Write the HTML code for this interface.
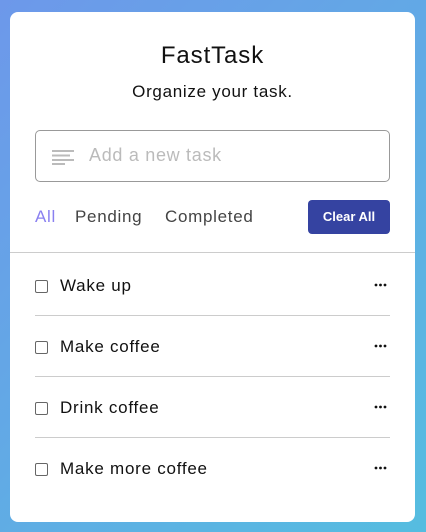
<!DOCTYPE html>
<html><head><style>
*{margin:0;padding:0;box-sizing:border-box}
body{width:426px;height:532px;overflow:hidden;background:linear-gradient(135deg,#6d98ea,#55bde0);font-family:"Liberation Sans",sans-serif;position:relative}
.card{position:absolute;left:10px;top:12px;width:405px;height:510px;background:#fff;border-radius:8px}
.abs{position:absolute}
h1{position:absolute;left:0;width:405px;top:30px;text-align:center;font-weight:normal;font-size:24px;letter-spacing:0.9px;color:#111}
.sub{position:absolute;left:0;width:405px;top:70px;text-align:center;font-size:17px;letter-spacing:0.7px;color:#111}
.input{left:25px;top:118px;width:355px;height:52px;border:1px solid #999;border-radius:5px}
.ph{left:79px;top:133px;font-size:18px;letter-spacing:0.7px;color:#bbb}
.f{top:195px;font-size:17px;letter-spacing:0.7px;color:#444}
.btn{left:298px;top:188px;width:82px;height:34px;background:#3543a1;border-radius:4px;color:#fff;font-size:13px;font-weight:bold;text-align:center;line-height:34px}
.hr{left:0;top:240px;width:405px;height:1px;background:#ccc}
.cb{position:absolute;width:13px;height:13px;border:1.3px solid #666;border-radius:2px}
.t{position:absolute;font-size:17px;letter-spacing:0.75px;color:#111}
.sep{left:25px;width:355px;height:1px;background:#ccc}
</style></head><body>
<div class="card">
<h1>FastTask</h1>
<div class="sub">Organize your task.</div>
<div class="abs input"></div>
<svg class="abs" style="left:42px;top:137px" width="22" height="16"><g fill="#bbb"><rect x="0" y="1" width="22" height="2"/><rect x="0" y="5.5" width="18" height="2"/><rect x="0" y="10" width="22" height="2"/><rect x="0" y="14" width="13" height="2"/></g></svg>
<div class="abs ph">Add a new task</div>
<div class="abs f" style="left:25px;color:#8a80f0">All</div>
<div class="abs f" style="left:65px">Pending</div>
<div class="abs f" style="left:155px">Completed</div>
<div class="abs btn">Clear All</div>
<div class="abs hr"></div>
<div class="cb" style="left:25px;top:268px"></div><div class="t" style="left:50px;top:264px">Wake up</div>
<div class="abs sep" style="top:303px"></div>
<div class="cb" style="left:25px;top:329px"></div><div class="t" style="left:50px;top:325px">Make coffee</div>
<div class="abs sep" style="top:364px"></div>
<div class="cb" style="left:25px;top:390px"></div><div class="t" style="left:50px;top:386px">Drink coffee</div>
<div class="abs sep" style="top:425px"></div>
<div class="cb" style="left:25px;top:451px"></div><div class="t" style="left:50px;top:447px">Make more coffee</div>
<svg class="abs" style="left:364px;top:271px" width="14" height="190"><g fill="#111"><circle cx="2" cy="2" r="1.4"/><circle cx="6.5" cy="2" r="1.4"/><circle cx="11" cy="2" r="1.4"/><circle cx="2" cy="63" r="1.4"/><circle cx="6.5" cy="63" r="1.4"/><circle cx="11" cy="63" r="1.4"/><circle cx="2" cy="124" r="1.4"/><circle cx="6.5" cy="124" r="1.4"/><circle cx="11" cy="124" r="1.4"/><circle cx="2" cy="185" r="1.4"/><circle cx="6.5" cy="185" r="1.4"/><circle cx="11" cy="185" r="1.4"/></g></svg>
</div>
</body></html>
